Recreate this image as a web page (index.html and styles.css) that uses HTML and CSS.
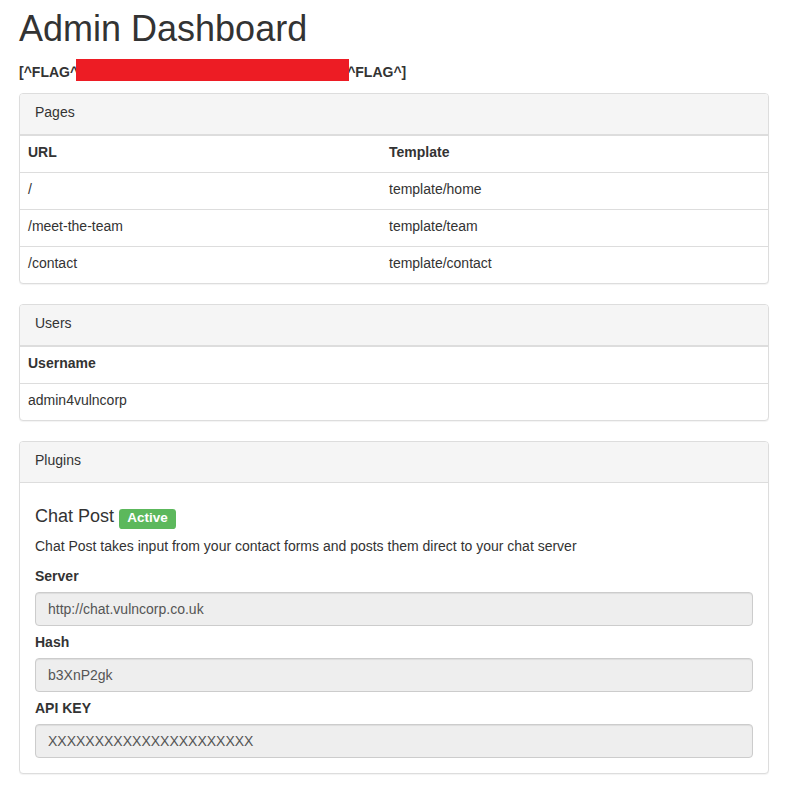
FILE: index.html
```html
<!DOCTYPE html>
<html>
<head>
<meta charset="utf-8">
<title>Admin Dashboard</title>
<link rel="stylesheet" href="styles.css">
</head>
<body>
<div class="container">
  <h1 class="title">Admin Dashboard</h1>
  <div class="flag"><span>[^FLAG^</span><span class="redact"></span><span>^FLAG^]</span></div>

  <div class="panel">
    <div class="panel-heading">Pages</div>
    <table class="table">
      <tr><th class="col-url">URL</th><th>Template</th></tr>
      <tr><td>/</td><td>template/home</td></tr>
      <tr><td>/meet-the-team</td><td>template/team</td></tr>
      <tr><td>/contact</td><td>template/contact</td></tr>
    </table>
  </div>

  <div class="panel">
    <div class="panel-heading">Users</div>
    <table class="table">
      <tr><th>Username</th></tr>
      <tr><td>admin4vulncorp</td></tr>
    </table>
  </div>

  <div class="panel">
    <div class="panel-heading">Plugins</div>
    <div class="panel-body">
      <h4 class="plugin-title">Chat Post <span class="label-success">Active</span></h4>
      <p class="desc">Chat Post takes input from your contact forms and posts them direct to your chat server</p>
      <label class="field-label">Server</label>
      <input class="form-control" type="text" value="http://chat.vulncorp.co.uk" disabled>
      <label class="field-label">Hash</label>
      <input class="form-control" type="text" value="b3XnP2gk" disabled>
      <label class="field-label">API KEY</label>
      <input class="form-control" type="text" value="XXXXXXXXXXXXXXXXXXXXXX" disabled>
    </div>
  </div>
</div>
</body>
</html>
```

FILE: styles.css
```css
* { box-sizing: border-box; }
html, body { margin: 0; padding: 0; background: #fff; }
body {
  font-family: "Liberation Sans", Arial, Helvetica, sans-serif;
  font-size: 14px;
  line-height: 20px;
  color: #333;
}
.container {
  width: 788px;
  padding: 0 18px 0 19px;
}
.title {
  font-size: 36px;
  font-weight: 500;
  line-height: 40px;
  margin: 9px 0 10px;
  color: #333;
}
.flag {
  height: 26px;
  line-height: 26px;
  font-weight: bold;
  white-space: nowrap;
}
.redact {
  position: relative;
  z-index: 1;
  display: inline-block;
  vertical-align: top;
  width: 273px;
  height: 22px;
  margin: 0 -2px 0 -2px;
  background: #ed1c24;
}
.panel {
  margin-top: 8px;
  margin-bottom: 20px;
  width: 750px;
  background: #fff;
  border: 1px solid #ddd;
  border-radius: 4px;
  box-shadow: 0 1px 1px rgba(0,0,0,.05);
}
.panel + .panel { margin-top: 0; }
.panel-heading {
  padding: 8px 15px 12px;
  background: #f5f5f5;
  border-bottom: 1px solid #ddd;
  border-radius: 3px 3px 0 0;
  color: #333;
}
.table {
  width: 100%;
  border-collapse: collapse;
  border-spacing: 0;
  border-top: 1px solid #ddd;
}
.table th, .table td {
  padding: 6px 8px 10px;
  text-align: left;
  line-height: 20px;
  border-top: 1px solid #ddd;
}
.table tr:first-child th { border-top: 0; }
.table th { font-weight: bold; }
.col-url { width: 361px; }
.panel-body {
  padding: 15px;
}
.plugin-title {
  font-size: 18px;
  font-weight: 500;
  line-height: 20px;
  margin: 8px 0 10px;
}
.label-success {
  display: inline;
  background: #5cb85c;
  color: #fff;
  font-size: 13.5px;
  font-weight: bold;
  line-height: 1;
  padding: .05em .6em .3em;
  border-radius: .25em;
  vertical-align: baseline;
}
.desc { margin: 0 0 10px; }
.field-label {
  display: block;
  font-weight: bold;
  margin-bottom: 6px;
}
.form-control {
  display: block;
  width: 100%;
  height: 34px;
  padding: 6px 12px;
  font-family: inherit;
  font-size: 14px;
  line-height: 20px;
  color: #555;
  background: #eee;
  border: 1px solid #ccc;
  border-radius: 4px;
  box-shadow: inset 0 1px 1px rgba(0,0,0,.075);
  margin: 0 0 6px;
  opacity: 1;
  -webkit-text-fill-color: #555;
}
.form-control:last-child { margin-bottom: 0; }
```
